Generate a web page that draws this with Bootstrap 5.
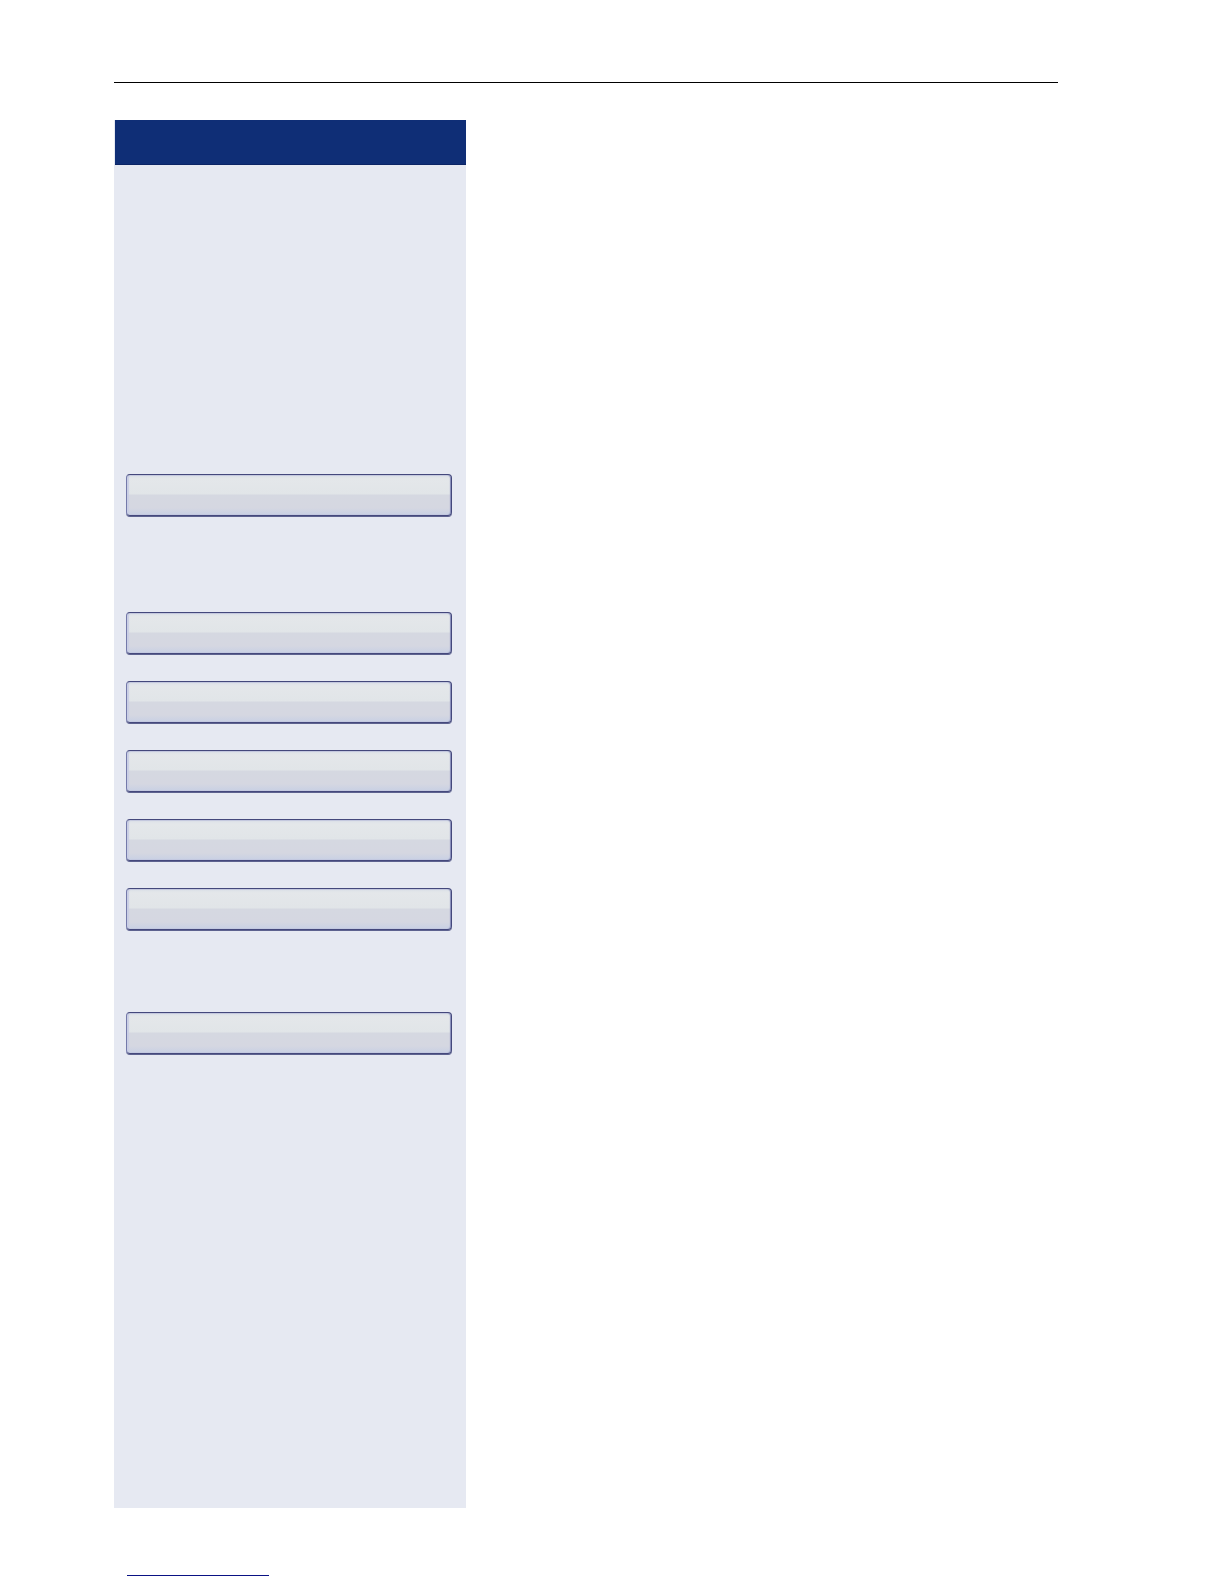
<!DOCTYPE html>
<html lang="en">
<head>
<meta charset="utf-8">
<meta name="viewport" content="width=device-width, initial-scale=1">
<title></title>
<link href="https://cdn.jsdelivr.net/npm/bootstrap@5.3.0/dist/css/bootstrap.min.css" rel="stylesheet">
<style>
body { font-family: "Liberation Sans", Arial, sans-serif; background: #fff; }
.sheet { padding: 82px 166px 8px 114px; }
.top-rule { height: 1px; background: #000; margin-bottom: 37px; }
.side-panel { width: 352px; max-width: 100%; background: #e6e9f2; padding-bottom: 454px; }
.panel-head { height: 45px; margin-left: 1px; background: #0f2e76; border-bottom: 1px solid #0b2465; }
.panel-keys { padding: 309px 14px 0 12px; gap: 27px; }
.key {
  height: 42px;
  padding: 0;
  border: 1px solid #44487c;
  border-left-color: #7479aa;
  border-radius: 4px;
  background: linear-gradient(#dce1e8 0, #e4e7ea 4px, #e1e5e8 19px, #d5d8e1 20px, #d5d7e1 33px, #c8d0e4 100%);
  box-shadow: 0 1px 0 #5d628f, inset 2px 0 1px #c9cee5, inset -1px 0 1px #8389b8, inset 0 1px 1px #c9cfe0;
}
.key-first { margin-bottom: 69px; }
.key-last { margin-top: 55px; }
.foot-link { width: 142px; height: 1px; margin: 67px 0 0 13px; background: #0a1284; }
</style>
<script src="https://cdn.jsdelivr.net/npm/bootstrap@5.3.0/dist/js/bootstrap.bundle.min.js" defer></script>
</head>
<body>
<div class="sheet">
  <header class="top-rule"></header>
  <aside class="side-panel">
    <div class="panel-head"></div>
    <div class="panel-keys d-flex flex-column">
      <button type="button" class="btn key key-first"></button>
      <button type="button" class="btn key"></button>
      <button type="button" class="btn key"></button>
      <button type="button" class="btn key"></button>
      <button type="button" class="btn key"></button>
      <button type="button" class="btn key"></button>
      <button type="button" class="btn key key-last"></button>
    </div>
  </aside>
  <footer><a href="#" class="foot-link d-block"></a></footer>
</div>
</body>
</html>
